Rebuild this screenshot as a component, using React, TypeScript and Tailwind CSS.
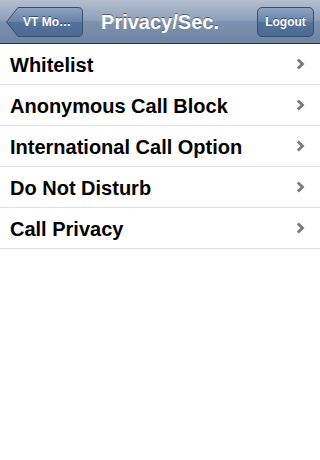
import React from 'react';

const items = ['Whitelist', 'Anonymous Call Block', 'International Call Option', 'Do Not Disturb', 'Call Privacy'];

function Chevron() {
  return (
    <svg width="9" height="12" viewBox="0 0 9 12" className="shrink-0">
      <path d="M1.8 1.5 L6.5 6 L1.8 10.5" fill="none" stroke="#7a7a7a" strokeWidth="2.8" />
    </svg>
  );
}

export default function App() {
  return (
    <div className="w-[320px] h-[460px] bg-white overflow-hidden [font-family:'Liberation_Sans',Arial,sans-serif]">
      {/* Nav bar */}
      <div className="relative h-[44px] flex items-center justify-between px-[6px] bg-[linear-gradient(#b3bfcf,#8b9eb7_50%,#7d92ae_50%,#6d84a2)] border-b border-[#2d3642]">
        <div className="relative h-[30px] w-[77px] flex items-center">
          <svg width="77" height="30" viewBox="0 0 77 30" className="absolute inset-0">
            <defs>
              <linearGradient id="bb" x1="0" y1="0" x2="0" y2="1">
                <stop offset="0" stopColor="#8ea3c0" />
                <stop offset="0.5" stopColor="#6582ab" />
                <stop offset="0.5" stopColor="#557399" />
                <stop offset="1" stopColor="#4a6996" />
              </linearGradient>
            </defs>
            <path d="M0.5 15 L12 0.5 H72 Q76.5 0.5 76.5 5 V25 Q76.5 29.5 72 29.5 H12 Z" fill="url(#bb)" stroke="#3b4d68" />
          </svg>
          <span className="relative pl-[17px] text-white font-bold text-[12px] [text-shadow:0_-1px_0_rgba(0,0,0,0.45)]">VT Mo…</span>
        </div>
        <span className="absolute left-0 right-0 text-center text-white font-bold text-[20px] pointer-events-none [text-shadow:0_-1px_0_rgba(0,0,0,0.45)]">Privacy/Sec.</span>
        <div className="h-[30px] w-[57px] rounded-[5px] border border-[#3b4d68] bg-[linear-gradient(#8ea3c0,#6582ab_50%,#557399_50%,#4a6996)] flex items-center justify-center">
          <span className="text-white font-bold text-[12px] [text-shadow:0_-1px_0_rgba(0,0,0,0.45)]">Logout</span>
        </div>
      </div>

      {/* List */}
      <div className="flex flex-col">
        {items.map((item) => (
          <div key={item} className="h-[41px] flex items-center justify-between pl-[10px] pr-[15px] border-b border-[#e0e0e0]">
            <span className="text-black font-bold text-[20px] pt-[2px]">{item}</span>
            <Chevron />
          </div>
        ))}
      </div>
    </div>
  );
}
